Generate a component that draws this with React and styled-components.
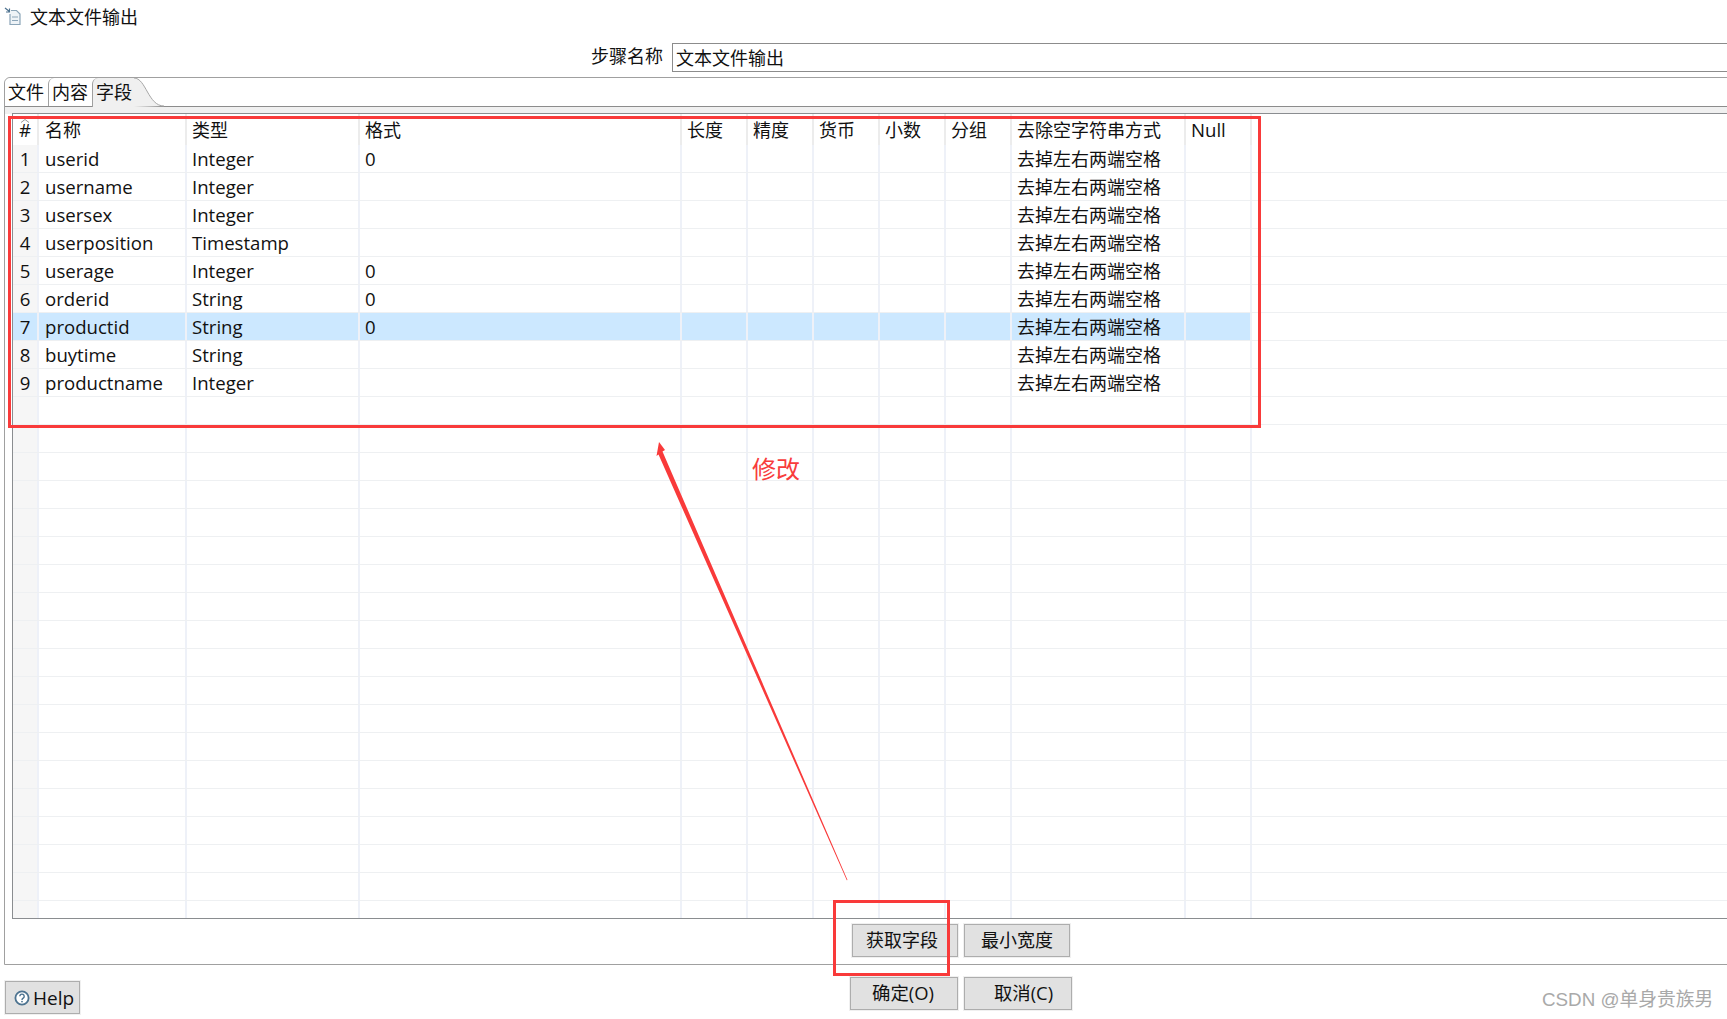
import React from "react"
import styled, { createGlobalStyle } from "styled-components"

const fontStack = `"Open Sans", "Noto Sans CJK SC", sans-serif`

const Global = createGlobalStyle`
    html, body {
        margin: 0;
        padding: 0;
        background: #fff;
        overflow: hidden;
    }
`

const Page = styled.div`
    position: relative;
    width: 1727px;
    height: 1019px;
    overflow: hidden;
    font-family: ${fontStack};
    font-size: 18px;
    color: #111;
    background: #fff;
`

const TitleBar = styled.div`
    display: flex;
    align-items: center;
    gap: 9px;
    height: 32px;
    padding-left: 4px;
`

const StepRow = styled.div`
    display: flex;
    align-items: center;
    gap: 9px;
    height: 32px;
    margin-top: 9px;
    padding-left: 591px;
`

const StepLabel = styled.span`
    margin-top: -5px;
`

const StepInput = styled.div`
    flex: 1;
    height: 29px;
    line-height: 28px;
    padding-left: 3px;
    margin-right: -10px;
    box-sizing: border-box;
    border: 1px solid #8c8c8c;
`

const TabFolder = styled.div`
    position: relative;
    margin: 4px -10px 0 4px;
    height: 888px;
    box-sizing: border-box;
    border: 1px solid #a0a0a0;
    border-radius: 6px 0 0 0;
    padding-top: 28px;
`

const TabStrip = styled.div`
    display: flex;
    height: 28px;
    margin-top: -28px;
    border-bottom: 1px solid #8c8c8c;
`

const Tab = styled.div`
    position: relative;
    width: ${(p) => p.$width}px;
    height: ${(p) => (p.$active ? 29 : 28)}px;
    flex: none;
    box-sizing: border-box;
    padding-left: 3px;
    line-height: 29px;
    white-space: nowrap;
    border-left: ${(p) => (p.$first ? "none" : "1px solid #a0a0a0")};
    border-radius: 6px 0 0 0;
    background: ${(p) => (p.$active ? "#f0f0f0" : "#fff")};
`

const TabCurve = styled.svg`
    display: block;
    flex: none;
    width: 30px;
    height: 29px;
`

const TabBody = styled.div`
    padding: 6px 0 0 7px;
    background: linear-gradient(#f0f0f0 7px, #fff 7px);
`

const TableFrame = styled.div`
    height: 806px;
    box-sizing: border-box;
    border: 1px solid #8a8d90;
    overflow: hidden;
    background: #fff;
`

const Row = styled.div`
    display: grid;
    grid-template-columns: 26px 148px 173px 322px 66px 66px 66px 66px 66px 174px 66px 1fr;
    height: ${(p) => (p.$header ? 31 : 28)}px;
    box-sizing: border-box;
    border-bottom: ${(p) => (p.$header ? "none" : "1px solid #eef0f2")};
`

const Cell = styled.div`
    box-sizing: border-box;
    padding-left: 5px;
    font-size: ${(p) => (p.$cjk ? 18 : 18.6)}px;
    line-height: ${(p) => (p.$cjk ? 29 : 27)}px;
    white-space: nowrap;
    overflow: hidden;
    border-right: 2px solid #eef1f8;
    background: ${(p) => (p.$selected ? "#cce8ff" : "transparent")};
`

const NameCell = styled(Cell)`
    padding-left: 6px;
`

const HeaderCell = styled(Cell)`
    line-height: ${(p) => (p.$cjk ? 33 : 31)}px;
    border-right-color: #ececec;
`

const IndexCell = styled(Cell)`
    position: relative;
    padding-left: 0;
    text-align: center;
    line-height: ${(p) => (p.$header ? 31 : 27)}px;
    border-right-color: ${(p) => (p.$header ? "#ececec" : "#eef1f8")};
    background: ${(p) => (p.$selected ? "#cce8ff" : p.$header ? "#fff" : "#f6f6f6")};
`

const SortCaret = styled.svg`
    position: absolute;
    top: 5px;
    left: 7px;
    width: 10px;
    height: 4px;
`

const Filler = styled.div``

const ButtonRow = styled.div`
    display: flex;
    gap: 6px;
    margin-top: ${(p) => p.$top}px;
    padding-left: ${(p) => p.$left}px;
`

const Button = styled.div`
    width: ${(p) => p.$width}px;
    height: 33px;
    box-sizing: border-box;
    display: flex;
    align-items: center;
    justify-content: center;
    gap: 3px;
    padding: 0 ${(p) => p.$trim || 0}px 3px ${(p) => p.$inset || 0}px;
    background: #e1e1e1;
    border: 1px solid #adadad;
    box-shadow: 0 0 0 1px #f0f0f0;
`

const Footer = styled.div`
    display: flex;
    align-items: flex-start;
    padding-left: 5px;
`

const HelpButton = styled(Button)`
    margin-top: 16px;
    justify-content: flex-start;
    padding: 0 0 0 8px;
    font-size: 19px;
`

const FooterButtons = styled(ButtonRow)`
    margin-top: 12px;
    padding-left: 770px;
    font-size: 18.4px;
`

const Overlay = styled.svg`
    position: absolute;
    top: 0;
    left: 0;
    width: 1727px;
    height: 1019px;
    pointer-events: none;
`

const Mark = styled.div`
    position: absolute;
    left: ${(p) => p.$x}px;
    top: ${(p) => p.$y}px;
    width: ${(p) => p.$w}px;
    height: ${(p) => p.$h}px;
    box-sizing: border-box;
    border: 3px solid #f93a3a;
`

const Note = styled.div`
    position: absolute;
    left: 752px;
    top: 451px;
    font-size: 24px;
    line-height: 36px;
    color: #f83c3c;
`

const Watermark = styled.div`
    position: absolute;
    left: 1542px;
    top: 987px;
    font-family: "Liberation Sans", "Noto Sans CJK SC", sans-serif;
    font-size: 18.8px;
    line-height: 26px;
    color: #a9a9a9;
    white-space: nowrap;
`

const columns = ["类型", "格式", "长度", "精度", "货币", "小数", "分组", "去除空字符串方式"]

const fields = [
    ["userid", "Integer", "0"],
    ["username", "Integer", ""],
    ["usersex", "Integer", ""],
    ["userposition", "Timestamp", ""],
    ["userage", "Integer", "0"],
    ["orderid", "String", "0"],
    ["productid", "String", "0"],
    ["buytime", "String", ""],
    ["productname", "Integer", ""],
]

const rows = Array.from({ length: 28 }, (_, i) => fields[i] || null)

function FileIcon() {
    return (
        <svg width="17" height="19" viewBox="0 0 17 19">
            <path d="M1 1l4.5 3.5M5.500 1.500V5H2" fill="none" stroke="#4f7390" strokeWidth="1.200" />
            <path d="M7 3.500h5.500l3.500 3.500v10.500h-10v-10.500" fill="#eef3f7" stroke="#8ba5b8" strokeWidth="1.200" />
            <path d="M8 10h6M8 13.500h6" stroke="#8ba5b8" strokeWidth="1.200" />
        </svg>
    )
}

function HelpIcon() {
    return (
        <svg width="16" height="16" viewBox="0 0 16 16">
            <circle cx="8" cy="8" r="6.600" fill="#fff" stroke="#4d7390" strokeWidth="1.800" />
            <path d="M5.800 6.300a2.200 2.200 0 1 1 3.400 1.900c-.8.500-1.200.900-1.200 1.700" fill="none" stroke="#4d7390" strokeWidth="1.400" />
            <circle cx="8" cy="11.600" r="0.900" fill="#4d7390" />
        </svg>
    )
}

export default function App() {
    return (
        <Page>
            <Global />
            <TitleBar>
                <FileIcon />
                文本文件输出
            </TitleBar>
            <StepRow>
                <StepLabel>步骤名称</StepLabel>
                <StepInput>文本文件输出</StepInput>
            </StepRow>
            <TabFolder>
                <TabStrip>
                    <Tab $width={43} $first>文件</Tab>
                    <Tab $width={44}>内容</Tab>
                    <Tab $width={42} $active>字段</Tab>
                    <TabCurve viewBox="0 0 30 29">
                        <path d="M0 0C12 0 14 28 30 28L0 29Z" fill="#f0f0f0" />
                        <path d="M0 0C12 0 14 28 30 28" fill="none" stroke="#a6a6a6" />
                    </TabCurve>
                </TabStrip>
                <TabBody>
                    <TableFrame>
                        <Row $header>
                            <IndexCell $header>
                                <SortCaret viewBox="0 0 10 4">
                                    <path d="M1 3.500L5 .5L9 3.500" fill="none" stroke="#999" />
                                </SortCaret>
                                #
                            </IndexCell>
                            <HeaderCell $cjk as={NameCell}>名称</HeaderCell>
                            {columns.map((c) => (
                                <HeaderCell $cjk key={c}>{c}</HeaderCell>
                            ))}
                            <HeaderCell>Null</HeaderCell>
                            <Filler />
                        </Row>
                        {rows.map((field, i) => {
                            const selected = i === 6
                            return (
                                <Row key={i}>
                                    <IndexCell $selected={selected}>{field ? i + 1 : ""}</IndexCell>
                                    <NameCell $selected={selected}>{field && field[0]}</NameCell>
                                    <Cell $selected={selected}>{field && field[1]}</Cell>
                                    <Cell $selected={selected}>{field && field[2]}</Cell>
                                    <Cell $selected={selected} />
                                    <Cell $selected={selected} />
                                    <Cell $selected={selected} />
                                    <Cell $selected={selected} />
                                    <Cell $selected={selected} />
                                    <Cell $cjk $selected={selected}>{field && "去掉左右两端空格"}</Cell>
                                    <Cell $selected={selected} />
                                    <Filler />
                                </Row>
                            )
                        })}
                    </TableFrame>
                    <ButtonRow $top={5} $left={840}>
                        <Button $width={106} $trim={6}>获取字段</Button>
                        <Button $width={106}>最小宽度</Button>
                    </ButtonRow>
                </TabBody>
            </TabFolder>
            <Footer>
                <HelpButton $width={75}>
                    <HelpIcon />
                    Help
                </HelpButton>
                <FooterButtons>
                    <Button $width={108} $trim={2}>确定(O)</Button>
                    <Button $width={108} $inset={11}>取消(C)</Button>
                </FooterButtons>
            </Footer>

            <Mark $x={8} $y={116} $w={1253} $h={312} />
            <Mark $x={833} $y={900} $w={117} $h={76} />
            <Overlay viewBox="0 0 1727 1019">
                <path d="M659 442L665 450L662.500 451.500L847.500 880L846.800 880.300L658.500 454.500L656.500 456Z" fill="#f93a3a" />
            </Overlay>
            <Note>修改</Note>
            <Watermark>CSDN @单身贵族男</Watermark>
        </Page>
    )
}
